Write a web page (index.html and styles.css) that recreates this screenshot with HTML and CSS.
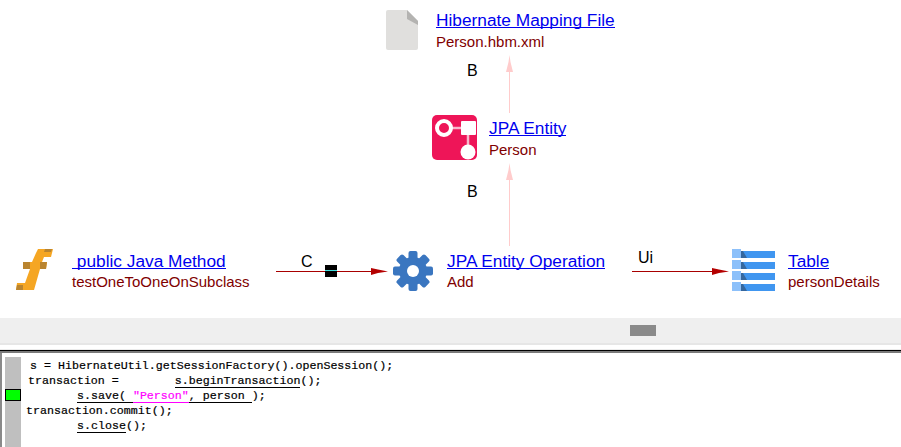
FILE: index.html
```html
<!DOCTYPE html>
<html lang="en">
<head>
<meta charset="utf-8">
<title>Transaction graph</title>
<link rel="stylesheet" href="styles.css">
</head>
<body>
<main class="page">
  <section class="diagram">
    <svg class="edges" width="901" height="318" viewBox="0 0 901 318">
      <g fill="#ffcccc" stroke="none">
        <rect x="509" y="70" width="1" height="43"/>
        <path d="M509.500 55 L510.500 62 L513 72 L506 72 L508.500 62 Z"/>
        <rect x="509" y="178" width="1" height="68"/>
        <path d="M509.500 163 L510.500 170 L513 180 L506 180 L508.500 170 Z"/>
      </g>
      <g fill="#b40000">
        <rect x="276" y="271" width="98" height="1" fill="#a80000"/>
        <path d="M371 268 L378 269.500 L388 271.500 L378 273 L371 275 Z"/>
        <rect x="632" y="271" width="85" height="1" fill="#a80000"/>
        <path d="M712 268 L719 269.500 L729 271.500 L719 273 L712 275 Z"/>
      </g>
      <rect x="325" y="265" width="12" height="12" fill="#000"/>
      <rect x="325" y="270" width="12" height="1" fill="#40e0e0"/>
    </svg>

    <span class="edge-label label-b1">B</span>
    <span class="edge-label label-b2">B</span>
    <span class="edge-label label-c">C</span>
    <span class="edge-label label-ui">Ui</span>

    <article class="node node-file">
      <svg class="icon" width="33" height="41" viewBox="0 0 33 41">
        <path d="M2 0 H21 L32 11 V38 Q32 40 30 40 H2 Q0 40 0 38 V2 Q0 0 2 0 Z" fill="#e0dfdd"/>
        <path d="M21 0 L32 11 L32 15 L21 9 Z" fill="#b4b3b1"/>
      </svg>
      <div class="node-text"><a href="#">Hibernate Mapping File</a><span>Person.hbm.xml</span></div>
    </article>

    <article class="node node-entity">
      <svg class="icon" width="45" height="45" viewBox="0 0 45 45">
        <rect width="45" height="45" rx="5" fill="#ee1558"/>
        <path d="M12 13 H36 V37" fill="none" stroke="#f8b8cc" stroke-width="2.500"/>
        <circle cx="12" cy="13" r="7" fill="#ee1558" stroke="#fff" stroke-width="4"/>
        <rect x="29" y="6" width="15" height="14" fill="#fff" rx="1"/>
        <circle cx="36" cy="37" r="7.500" fill="#fff"/>
      </svg>
      <div class="node-text"><a href="#">JPA Entity</a><span>Person</span></div>
    </article>

    <article class="node node-method">
      <svg class="icon" width="39" height="42" viewBox="0 0 39 42">
        <path d="M23 0 H38 L36 8 H29 L27 13 H32 L31 20 H25 L19 41 H1 L2 34 H10 L15 20 H8 L9 13 H17 L21 4 Z" fill="#f5a623"/>
        <path d="M30 0 h7 l-1 3 h-7 z M8 13 h7 v7 h-7 z M25 13 h7 l-1 7 h-6 z M2 36 h6 v5 h-7 z" fill="#b9842f"/>
      </svg>
      <div class="node-text"><a href="#">&nbsp;public Java Method</a><span>testOneToOneOnSubclass</span></div>
    </article>

    <article class="node node-op">
      <svg class="icon" width="40" height="40" viewBox="0 0 40 40">
        <g fill="#3a76c0">
          <circle cx="20" cy="20" r="14"/>
          <rect x="15.500" y="0" width="9" height="40" rx="2"/>
          <rect x="15.500" y="0" width="9" height="40" rx="2" transform="rotate(45 20 20)"/>
          <rect x="15.500" y="0" width="9" height="40" rx="2" transform="rotate(90 20 20)"/>
          <rect x="15.500" y="0" width="9" height="40" rx="2" transform="rotate(135 20 20)"/>
        </g>
        <circle cx="20" cy="20" r="6" fill="#fff"/>
      </svg>
      <div class="node-text"><a href="#">JPA Entity Operation</a><span>Add</span></div>
    </article>

    <article class="node node-table">
      <svg class="icon" width="44" height="44" viewBox="0 0 44 44">
        <g fill="#4096f0">
          <rect x="9" y="2" width="34" height="7"/><rect x="9" y="13" width="34" height="7"/>
          <rect x="9" y="24" width="34" height="7"/><rect x="9" y="35" width="34" height="7"/>
        </g>
        <g fill="#8cc0fa">
          <rect x="0" y="0" width="9" height="9"/><rect x="0" y="11" width="9" height="9"/>
          <rect x="0" y="22" width="9" height="9"/><rect x="0" y="33" width="9" height="9"/>
        </g>
        <g fill="#35679e">
          <path d="M9 2 L11 2 L15 9 H9 Z"/><path d="M9 13 L11 13 L15 20 H9 Z"/>
          <path d="M9 24 L11 24 L15 31 H9 Z"/><path d="M9 35 L11 35 L15 42 H9 Z"/>
        </g>
      </svg>
      <div class="node-text"><a href="#">Table</a><span>personDetails</span></div>
    </article>
  </section>

  <div class="scrollbar"><div class="thumb"></div></div>
  <div class="divider"></div>

  <section class="code-panel">
    <div class="gutter"><div class="marker"></div></div>
    <pre class="code"><span class="line line-1">s = HibernateUtil.getSessionFactory().openSession();</span>
<span class="line line-2">transaction =        <u>s.beginTransaction</u>();</span>
<span class="line line-3"><u>s.save( <b class="str">"Person"</b>, person </u>);</span>
<span class="line line-4">transaction.commit();</span>
<span class="line line-3"><u>s.close</u>();</span></pre>
  </section>
</main>
</body>
</html>
```
FILE: styles.css
```css
* { box-sizing: border-box; }
html, body { margin: 0; padding: 0; background: #fff; overflow: hidden; }
.page { width: 901px; height: 447px; display: flex; flex-direction: column; font-family: "Liberation Sans", Arial, sans-serif; }

.diagram { position: relative; height: 318px; flex: none; }
.edges { position: absolute; left: 0; top: 0; }
.edge-label { position: absolute; font-size: 16px; line-height: 18px; color: #000; }
.label-b1 { left: 467px; top: 62px; }
.label-b2 { left: 467px; top: 183px; }
.label-c { left: 301px; top: 253px; }
.label-ui { left: 638px; top: 249px; }

.node { position: absolute; display: flex; align-items: flex-start; }
.icon { position: absolute; display: block; }
.node-text { display: flex; flex-direction: column; align-items: flex-start; white-space: nowrap; line-height: 22px; }
.node-text a { color: #0000ee; font-size: 17.300px; text-decoration: none; border-bottom: 1px solid #0000ee; height: 19px; line-height: 23px; }
.node-text span { color: #800000; font-size: 15px; margin-top: 2px; }

.node-file { left: 436px; top: 9px; }
.node-file span { margin-top: 3px; }
.node-file .icon { left: -50px; top: 1px; }
.node-entity { left: 489px; top: 117px; }
.node-entity span { margin-top: 3px; }
.node-entity .icon { left: -57px; top: -2px; }
.node-method { left: 72px; top: 250px; }
.node-method .icon { left: -57px; top: -1px; }
.node-op { left: 447px; top: 250px; }
.node-op .icon { left: -54px; top: 1px; }
.node-table { left: 788px; top: 250px; }
.node-table .icon { left: -56px; top: -1px; }

.scrollbar { height: 25px; flex: none; background: #efefef; padding: 7px 0 0 630px; }
.thumb { width: 26px; height: 11px; background: #8a8a8a; }

.divider { height: 10px; flex: none; border-top: 2px solid #e6e6e6; background: linear-gradient(#fff 0 4px, #ebebeb 4px 6px, #fff 6px); border-bottom: 2px solid #7a7a7a; box-shadow: inset 0 -1px 0 #000; }

.code-panel { flex: 1; display: flex; padding: 4px 0 0 3px; border-left: 2px solid #8a8a8a; min-height: 0; }
.gutter { width: 16px; flex: none; background: #bfbfbf; padding-top: 32px; }
.marker { width: 16px; height: 12px; background: #00ff00; border: 1px solid #000; }
.code { margin: 0; padding-top: 1px; font-family: "Liberation Mono", "Courier New", monospace; font-size: 11.650px; line-height: 15px; color: #000; -webkit-text-stroke: 0.200px #000; }
.line { display: inline-block; height: 15px; }
.line-1 { padding-left: 9px; }
.line-2 { padding-left: 7px; }
.line-3 { padding-left: 56px; }
.line-4 { padding-left: 5px; }
.code u { text-decoration: none; border-bottom: 1px solid #000; display: inline-block; height: 15px; }
.str { color: #ff00ff; font-weight: normal; -webkit-text-stroke: 0.200px #ff00ff; border-bottom: 1px solid #ff00ff; display: inline-block; height: 15px; }
```
